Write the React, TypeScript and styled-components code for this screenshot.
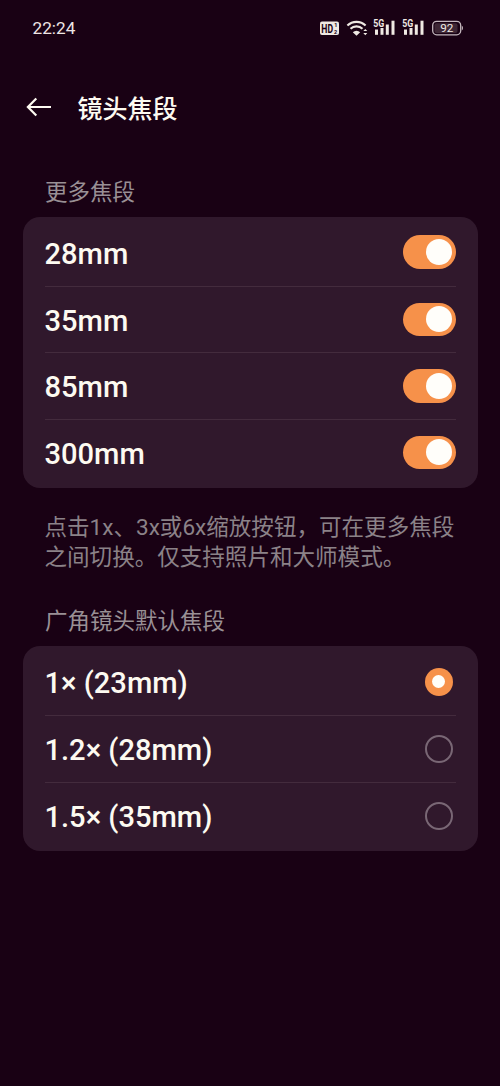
import React, { useState } from 'react';
import styled, { createGlobalStyle } from 'styled-components';

const GlobalStyle = createGlobalStyle`
  * { box-sizing: border-box; }
  html, body { margin: 0; padding: 0; background: #190114; }
  body { font-family: Roboto, "Noto Sans CJK SC", sans-serif; }
`;

const Screen = styled.main`
  width: 500px;
  height: 1086px;
  overflow: hidden;
  background: #190114;
  color: #fdfaf1;
`;

const StatusBar = styled.div`
  display: flex;
  justify-content: space-between;
  align-items: center;
  height: 56px;
  padding: 0 37px 0 32.5px;
`;

const Clock = styled.time`
  font-size: 17.2px;
  line-height: 20px;
  color: #efe6e6;
`;

const StatusIcons = styled.svg`
  display: block;
  width: 145px;
  height: 24px;
`;

const Header = styled.header`
  display: flex;
  align-items: center;
  height: 102px;
  padding-left: 26px;
`;

const BackButton = styled.button`
  width: 26px;
  height: 22px;
  padding: 0;
  border: 0;
  background: none;
  color: #fdfaf1;
  svg { display: block; }
`;

const Title = styled.h1`
  margin: 0 0 0 25.5px;
  padding-top: 5px;
  font-size: 25px;
  line-height: 36px;
  font-weight: 500;
`;

const Section = styled.section<{ $top: number }>`
  padding: ${(p) => p.$top}px 22.5px 0;
`;

const Label = styled.h2`
  margin: 0;
  padding: 0 22.5px;
  height: 40.7px;
  font-size: 22.5px;
  line-height: 32px;
  font-weight: 400;
  color: #999095;
`;

const Card = styled.div`
  padding: 2.5px 22px 2.6px;
  border-radius: 17px;
  background: #30182c;
`;

const Row = styled.label`
  display: flex;
  align-items: center;
  justify-content: space-between;
  height: 66.6px;
  & + & { border-top: 1px solid #432b3d; }
`;

const RowText = styled.span`
  padding-top: 2.6px;
  font-size: 29.1px;
  line-height: 36px;
  font-weight: 500;
`;

const Toggle = styled.button<{ $on: boolean }>`
  display: flex;
  justify-content: ${(p) => (p.$on ? 'flex-end' : 'flex-start')};
  align-items: center;
  width: 53px;
  height: 33.4px;
  padding: 0 4px;
  margin-bottom: 0.6px;
  border: 0;
  border-radius: 17px;
  background: ${(p) => (p.$on ? '#f6914a' : '#5a4555')};
`;

const Knob = styled.span`
  width: 26px;
  height: 26px;
  border-radius: 50%;
  background: #fffefa;
`;

const Radio = styled.button<{ $on: boolean }>`
  display: grid;
  place-items: center;
  width: 28px;
  height: 28px;
  margin-right: 3px;
  padding: 0;
  border: ${(p) => (p.$on ? '0' : '2px solid #796775')};
  border-radius: 50%;
  background: ${(p) => (p.$on ? '#f6914a' : 'transparent')};
`;

const RadioDot = styled.span`
  width: 13px;
  height: 13px;
  border-radius: 50%;
  background: #fffefa;
`;

const Description = styled.p`
  margin: 0;
  padding: 24.7px 0 0 22px;
  font-size: 22.56px;
  line-height: 30.5px;
  color: #8b8288;
  white-space: nowrap;
`;

const Bars = ({ x }: { x: number }) => (
  <g>
    <text x={x - 0.3} y="11" fontSize="10" fontWeight="700" textLength="11" lengthAdjust="spacingAndGlyphs">5G</text>
    <rect x={x + 1.5} y="13.5" width="3" height="5.3" />
    <rect x={x + 7} y="12" width="3" height="6.8" />
    <rect x={x + 12.3} y="8.5" width="3" height="10.3" />
    <rect x={x + 18} y="4.7" width="3" height="14.1" />
  </g>
);

const SystemIcons = () => (
  <StatusIcons viewBox="0 0 145 24" fill="#efe9e3" fontFamily="Roboto, sans-serif">
    <rect x="2" y="5.5" width="19" height="13.5" rx="2" />
    <g fill="#190114" fontWeight="700">
      <text x="3.3" y="16.5" fontSize="12" textLength="11.7" lengthAdjust="spacingAndGlyphs">HD</text>
      <text x="16.2" y="11" fontSize="5.5">1</text>
      <text x="16" y="18.2" fontSize="5.5">2</text>
    </g>
    <g fill="none" stroke="#efe9e3" strokeWidth="2.1">
      <path d="M29.4 9.5a13.2 13.2 0 0 1 18.2 0" />
      <path d="M32.5 12.8a8.7 8.7 0 0 1 12 0" />
    </g>
    <path d="M34.8 16.2a5.2 5.2 0 0 1 7.4 0l-3.7 3.6z" />
    <path d="M45.3 15.1l2-2.2 2 2.2zM45.3 17l2 2.2 2-2.2z" />
    <Bars x={55.5} />
    <Bars x={84.5} />
    <rect x="114.7" y="5.4" width="28" height="13.4" rx="4" fill="none" stroke="#c4b7be" strokeWidth="1.3" />
    <rect x="116.5" y="7.2" width="23" height="9.8" rx="2" fill="#3d2635" />
    <path d="M143.8 9.8q1.2.3 1.2 2.3t-1.2 2.3z" fill="#c4b7be" />
    <text x="122.3" y="16.3" fontSize="11.7">92</text>
  </StatusIcons>
);

const focalLengths = ['28mm', '35mm', '85mm', '300mm'];
const defaults = ['1× (23mm)', '1.2× (28mm)', '1.5× (35mm)'];

export default function App() {
  const [enabled, setEnabled] = useState(focalLengths.map(() => true));
  const [selected, setSelected] = useState(0);

  return (
    <>
      <GlobalStyle />
      <Screen>
        <StatusBar>
          <Clock>22:24</Clock>
          <SystemIcons />
        </StatusBar>
        <Header>
          <BackButton aria-label="返回">
            <svg width="26" height="22" viewBox="0 0 26 22" fill="none" stroke="currentColor" strokeWidth="2.2">
              <path d="M25 11H2M10.3 2.5L1.9 11l8.4 8.5" />
            </svg>
          </BackButton>
          <Title>镜头焦段</Title>
        </Header>
        <Section $top={18}>
          <Label>更多焦段</Label>
          <Card>
            {focalLengths.map((name, i) => (
              <Row key={name}>
                <RowText>{name}</RowText>
                <Toggle
                  role="switch"
                  aria-checked={enabled[i]}
                  $on={enabled[i]}
                  onClick={() => setEnabled(enabled.map((v, j) => (j === i ? !v : v)))}
                >
                  <Knob />
                </Toggle>
              </Row>
            ))}
          </Card>
          <Description>
            点击1x、3x或6x缩放按钮，可在更多焦段
            <br />
            之间切换。仅支持照片和大师模式。
          </Description>
        </Section>
        <Section $top={31.5}>
          <Label>广角镜头默认焦段</Label>
          <Card>
            {defaults.map((name, i) => (
              <Row key={name}>
                <RowText>{name}</RowText>
                <Radio role="radio" aria-checked={selected === i} $on={selected === i} onClick={() => setSelected(i)}>
                  {selected === i && <RadioDot />}
                </Radio>
              </Row>
            ))}
          </Card>
        </Section>
      </Screen>
    </>
  );
}
